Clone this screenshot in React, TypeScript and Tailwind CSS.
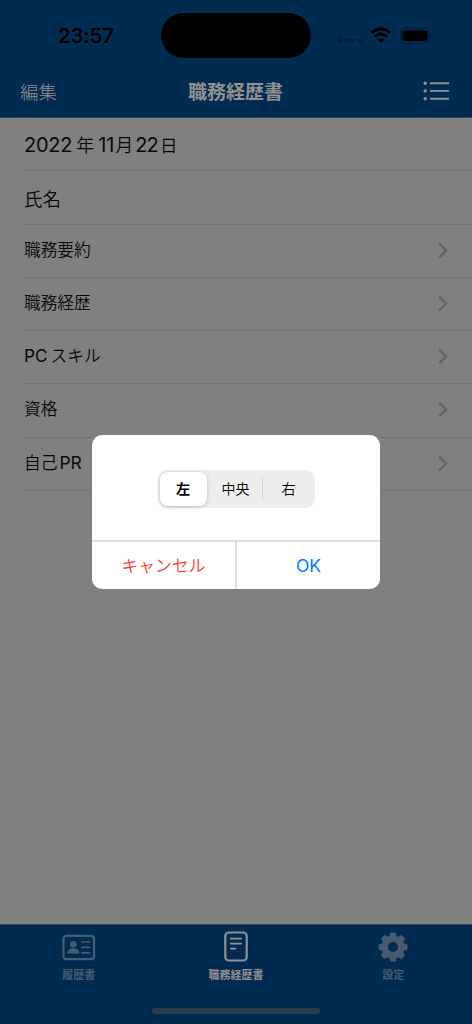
import React from 'react';

const rows = [
  { parts: [['2022', 'tracking-[-0.25px] mr-[4px]'], ['年', 'text-[18px] mr-[4px] font-[350]'], ['11', 'tracking-[-0.1px] mr-px'], ['月', 'text-[18px] font-[350]'], ['22', 'tracking-[-0.9px] ml-[2px] mr-[2px]'], ['日', 'text-[17.5px] font-[350]']], large: true },
  { parts: [['氏名', 'text-[18.5px] font-[350] relative top-px']], large: true },
  { parts: [['職務要約', 'font-[350]']], large: false },
  { parts: [['職務経歴', 'font-[350]']], large: false },
  { parts: [['PC', 'text-[17.2px] mr-[3px]'], ['スキル', 'font-[350]']], large: false },
  { parts: [['資格', 'font-[350]']], large: false },
  { parts: [['自己', 'mr-[2px] font-[350]'], ['PR', 'text-[17.5px]']], large: false },
];

function Chevron() {
  return (
    <svg width="10" height="16" viewBox="0 0 10 16" fill="none" stroke="#646464" strokeWidth="2.4" strokeLinecap="round" strokeLinejoin="round">
      <path d="M2 1.3 8.2 7.5 2 13.7" />
    </svg>
  );
}

function StatusBar() {
  return (
    <div className="flex h-[71px] items-start pt-[13px] text-black">
      <div className="w-[161px] pl-[58px] pt-[10px] font-['Inter'] text-[20.5px] font-semibold leading-[26px] tracking-[-0.25px]">23:57</div>
      <div className="h-[45px] w-[150px] rounded-full bg-black" />
      <div className="flex h-[45px] flex-1 items-center pl-[27px]">
        <svg width="96" height="18" viewBox="0 0 96 18">
          <g fill="#001d36">
            <circle cx="2.6" cy="13.6" r="2" />
            <circle cx="9" cy="13.6" r="2" />
            <circle cx="15.4" cy="13.6" r="2" />
            <circle cx="21.8" cy="13.6" r="2" />
          </g>
          <g transform="translate(33 .5)" fill="none" stroke="#000" strokeWidth="2.9">
            <path d="M.9 5.3a12.8 12.8 0 0 1 18.2 0" />
            <path d="M4.2 8.9a8.2 8.2 0 0 1 11.6 0" />
            <path d="M10 15.5 6.8 12.2a4.5 4.5 0 0 1 6.4 0Z" fill="#000" stroke="none" />
          </g>
          <rect x="62.6" y="1" width="28.8" height="15" rx="4.6" fill="none" stroke="#001d36" strokeWidth="1.2" />
          <rect x="64.4" y="3.2" width="25.2" height="10.8" rx="3" />
          <path d="M93 6.2v5q2-.8 2-2.5T93 6.2Z" fill="#001d36" />
        </svg>
      </div>
    </div>
  );
}

function ResumeIcon() {
  return (
    <svg width="34" height="28" viewBox="0 0 34 28">
      <rect x="1.5" y="1.8" width="30.5" height="23.4" rx="3" fill="none" stroke="currentColor" strokeWidth="2.2" />
      <circle cx="11.3" cy="10.2" r="3.3" fill="currentColor" />
      <path d="M5.2 19.5c0-3 2.4-5.2 6.1-5.2s6.1 2.2 6.1 5.2Z" fill="currentColor" />
      <path d="M20 8h7.5M20 13.4h7.5M20 18.8h7.5" stroke="currentColor" strokeWidth="1.7" strokeLinecap="round" />
    </svg>
  );
}

function DocumentIcon() {
  return (
    <svg width="26" height="32" viewBox="0 0 26 32" fill="none" stroke="currentColor" strokeLinecap="round">
      <rect x="2.3" y="1.5" width="21.4" height="28" rx="3.4" strokeWidth="2.2" />
      <path d="M7.8 7.6h10.4M7.8 12.6h10.4M7.8 17.6h4.7" strokeWidth="1.8" />
    </svg>
  );
}

function GearIcon() {
  return (
    <svg width="32" height="32" viewBox="-16 -16 32 32" fill="currentColor">
      <circle r="8.3" fill="none" stroke="currentColor" strokeWidth="6.4" />
      {[0, 45, 90, 135, 180, 225, 270, 315].map((angle) => (
        <path key={angle} d="M-4.8-9.2Q-3.7-10-3.3-12L-3-13.4Q-2.8-14.5-1.7-14.5H1.7Q2.8-14.5 3-13.4L3.3-12Q3.7-10 4.8-9.2Z" transform={`rotate(${angle})`} />
      ))}
    </svg>
  );
}

export default function App() {
  return (
    <div className="relative flex h-[1024px] w-[472px] flex-col overflow-hidden bg-[#808080] font-['Inter','Noto_Sans_CJK_JP',sans-serif] text-[#090909]">
      <header className="h-[118px] shrink-0 border-b border-[#3e464d] bg-[#002b50] text-[#919191]">
        <StatusBar />
        <div className="grid h-[40px] grid-cols-[1fr_auto_1fr] items-center pl-[19px] pr-[22px]">
          <span className="pl-px pt-[3px] text-[18.5px] font-light">編集</span>
          <span className="pl-[2px] pt-[4px] text-[19px] font-semibold">職務経歴書</span>
          <svg className="justify-self-end" width="27" height="20" viewBox="0 0 27 20" fill="#919191">
            <circle cx="2.2" cy="2.2" r="1.7" />
            <circle cx="2.2" cy="9.9" r="1.7" />
            <circle cx="2.2" cy="17.7" r="1.7" />
            <path d="M7.8 2.2h17.5M7.8 9.9h17.5M7.8 17.7h17.5" stroke="#919191" strokeWidth="1.9" strokeLinecap="round" />
          </svg>
        </div>
      </header>

      <main className="flex-1">
        {rows.map((row, index) => (
          <div key={index} className="ml-6 flex h-[53.25px] items-center justify-between border-b border-[#757575] pr-[24px]">
            <div className={row.large ? 'flex items-baseline pt-[2px] text-[20px] leading-[30px]' : 'flex items-baseline pb-[2px] text-[16.7px] leading-[26px]'}>
              {row.parts.map(([text, style]) => <span key={text} className={style}>{text}</span>)}
            </div>
            {!row.large && <Chevron />}
          </div>
        ))}
      </main>

      <footer className="h-[100px] shrink-0 border-t border-[#3e464d] bg-[#002b50]">
        <div className="grid h-[83px] grid-cols-3 text-[11px] font-semibold text-[#475c70]">
          <div className="flex flex-col items-center">
            <div className="mb-px flex h-[42px] items-center pt-[3px]"><ResumeIcon /></div>
            <span className="leading-[14px]">履歴書</span>
          </div>
          <div className="flex flex-col items-center text-[#919191]">
            <div className="mb-px flex h-[42px] items-center pt-[2px]"><DocumentIcon /></div>
            <span className="font-bold leading-[14px]">職務経歴書</span>
          </div>
          <div className="flex flex-col items-center">
            <div className="mb-px flex h-[42px] items-center pt-[2px]"><GearIcon /></div>
            <span className="leading-[14px]">設定</span>
          </div>
        </div>
        <div className="mx-auto h-[6px] w-[168px] rounded-full bg-[#2b3e4f]" />
      </footer>

      <div role="dialog" className="absolute left-[92px] top-[435px] flex h-[154px] w-[288px] flex-col overflow-hidden rounded-[10px] bg-white">
        <div className="flex h-[105px] items-center justify-center pt-[3px]">
          <div className="flex h-[38px] w-[157px] items-center rounded-[9px] bg-[#eeeeee] p-[2px] text-[14px] text-black">
            <button className="h-[34px] w-[47px] rounded-[8px] bg-white pb-[2px] font-bold shadow-[0_1px_4px_rgba(0,0,0,0.2)]">左</button>
            <button className="h-[34px] w-[55px] pb-[2px] pl-[3px] font-[350]">中央</button>
            <span className="h-[22px] w-px bg-[#d5d5d5]" />
            <button className="h-[34px] flex-1 pb-[2px] pl-[2px] font-[350]">右</button>
          </div>
        </div>
        <div className="flex flex-1 border-t-2 border-[#e1e1e1] text-[16.8px]">
          <button className="flex-1 border-r-2 border-[#e1e1e1] pt-[2px] font-[350] text-[#ff3b30]">キャンセル</button>
          <button className="flex-1 pt-px text-[17.5px] text-[#007aff]">OK</button>
        </div>
      </div>
    </div>
  );
}
